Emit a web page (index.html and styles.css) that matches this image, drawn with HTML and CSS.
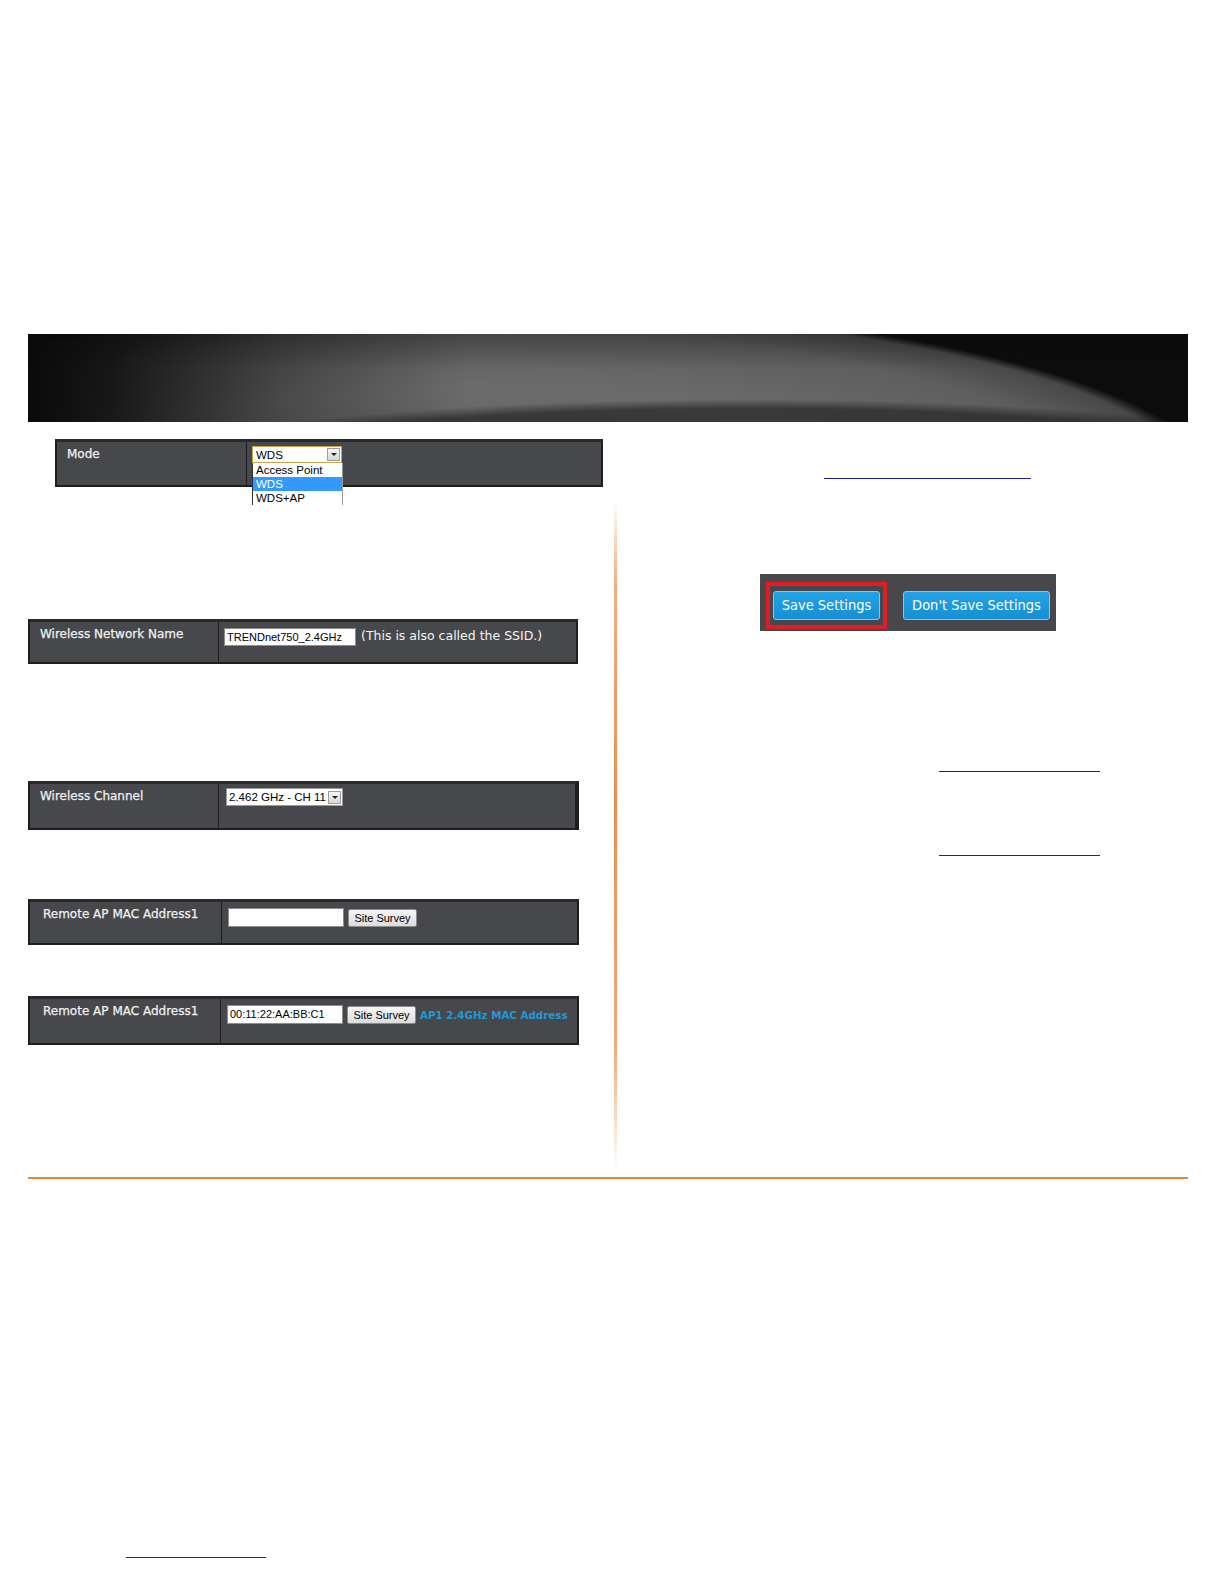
FILE: index.html
```html
<!DOCTYPE html>
<html>
<head>
<meta charset="utf-8">
<title>Wireless WDS settings</title>
<link rel="stylesheet" href="styles.css">
</head>
<body>
<div class="page">
  <div class="banner"></div>
  <div class="columns">
    <div class="left">
      <div class="panel panel-mode">
        <div class="label">Mode</div>
        <div class="value">
          <div class="select-wrap">
            <div class="select select-focus select-mode"><span class="select-text">WDS</span><span class="arrow"></span></div>
            <ul class="dropdown">
              <li>Access Point</li>
              <li class="selected">WDS</li>
              <li>WDS+AP</li>
            </ul>
          </div>
        </div>
      </div>

      <div class="panel panel-ssid">
        <div class="label">Wireless Network Name</div>
        <div class="value">
          <div class="input input-ssid">TRENDnet750_2.4GHz</div>
          <span class="note">(This is also called the SSID.)</span>
        </div>
      </div>

      <div class="panel panel-channel">
        <div class="label">Wireless Channel</div>
        <div class="value">
          <div class="select select-channel"><span class="select-text">2.462 GHz - CH 11</span><span class="arrow"></span></div>
        </div>
      </div>

      <div class="panel panel-remote1">
        <div class="label label-wide">Remote AP MAC Address1</div>
        <div class="value">
          <div class="input input-mac"></div>
          <div class="btn-survey">Site Survey</div>
        </div>
      </div>

      <div class="panel panel-remote2">
        <div class="label label-wide">Remote AP MAC Address1</div>
        <div class="value">
          <div class="input input-mac">00:11:22:AA:BB:C1</div>
          <div class="btn-survey">Site Survey</div>
          <span class="mac-note">AP1 2.4GHz MAC Address</span>
        </div>
      </div>
    </div>

    <div class="divider"></div>

    <div class="right">
      <a class="link link-1"></a>
      <div class="save-panel">
        <div class="highlight">
          <div class="btn-blue">Save Settings</div>
        </div>
        <div class="btn-blue btn-dont">Don't Save Settings</div>
      </div>
      <a class="link link-2"></a>
      <a class="link link-3"></a>
    </div>
  </div>
  <div class="rule"></div>
  <a class="link link-footer"></a>
</div>
</body>
</html>
```

FILE: styles.css
```css
html {
  margin: 0;
  padding: 0;
  width: 1224px;
  height: 1584px;
  overflow: hidden;
  background: #ffffff;
}

body {
  margin: 0;
  padding: 0;
  width: 1224px;
  height: 1584px;
  overflow: hidden;
  background: #ffffff;
  font-family: "DejaVu Sans", Verdana, sans-serif;
}

.page {
  box-sizing: border-box;
  width: 1224px;
  height: 1584px;
  padding: 334px 36px 0 28px;
}

.banner {
  width: 1160px;
  height: 88px;
  background:
    linear-gradient(90deg, #0a0a0a 0%, rgba(10,10,10,0.85) 7%, rgba(10,10,10,0.35) 22%, rgba(10,10,10,0) 38%),
    linear-gradient(180deg, rgba(10,10,10,0.3) 0%, rgba(10,10,10,0) 40%),
    radial-gradient(ellipse 700px 95px at 720px 160px, rgba(25,25,25,0.65) 0%, rgba(25,25,25,0.6) 90%, rgba(25,25,25,0) 100%),
    radial-gradient(ellipse 750px 190px at 446px 160px, #5c5c5c 0%, #6c6c6c 55%, #5e5e5e 85%, #484848 97%, #0c0c0c 100%);
  background-color: #0b0b0b;
}

.columns {
  display: grid;
  grid-template-columns: 586px 3px 1fr;
  height: 755px;
}

.left {
  display: flex;
  flex-direction: column;
  align-items: flex-start;
}

.panel {
  box-sizing: border-box;
  display: grid;
  background: #47484c;
  border: 2px solid #1e1e1f;
  border-top: 3px solid #2a2a2c;
  color: #f2f2f2;
}

.panel-mode {
  margin: 17px 0 0 27px;
  width: 548px;
  height: 48px;
  grid-template-columns: 190px 1fr;
}

.panel-ssid {
  margin-top: 132px;
  width: 550px;
  height: 45px;
  grid-template-columns: 189px 1fr;
}

.panel-channel {
  margin-top: 117px;
  width: 551px;
  height: 49px;
  grid-template-columns: 189px 1fr;
  border-right-width: 4px;
}

.panel-remote1 {
  margin-top: 69px;
  width: 551px;
  height: 46px;
  grid-template-columns: 192px 1fr;
}

.panel-remote2 {
  margin-top: 51px;
  width: 551px;
  height: 49px;
  grid-template-columns: 191px 1fr;
}

.label {
  border-right: 1px solid #1e1e1f;
  padding: 5px 0 0 10px;
  font-size: 12px;
  line-height: 14px;
  color: #f0f0f0;
  -webkit-text-stroke: 0.25px #f0f0f0;
  white-space: nowrap;
}

.label-wide {
  padding-left: 13px;
}

.value {
  display: flex;
  align-items: flex-start;
  padding: 3px 0 0 5px;
  gap: 4px;
}

.select-wrap {
  position: relative;
  margin-top: 1px;
}

.select {
  box-sizing: border-box;
  display: flex;
  align-items: center;
  justify-content: space-between;
  background: #ffffff;
  border: 1px solid #9a9a9a;
  color: #000;
  font-family: "Liberation Sans", Arial, sans-serif;
  font-size: 11.5px;
  padding: 0 1px 0 3px;
  white-space: nowrap;
}

.select-focus {
  border-color: #c9a54a;
}

.select-mode {
  width: 90px;
  height: 17px;
}

.select-channel {
  width: 117px;
  height: 18px;
  margin: 1px 0 0 2px;
  padding-left: 2px;
}

.arrow {
  box-sizing: border-box;
  flex-shrink: 0;
  width: 13px;
  height: 13px;
  background: linear-gradient(#f4f4f4, #d8d8d8);
  border: 1px solid #9c9c9c;
  position: relative;
}

.arrow::after {
  content: "";
  position: absolute;
  left: 3px;
  top: 4px;
  border-left: 3px solid transparent;
  border-right: 3px solid transparent;
  border-top: 3px solid #222;
}

.dropdown {
  position: absolute;
  left: 0;
  top: 17px;
  width: 89px;
  margin: 0;
  padding: 0;
  list-style: none;
  background: #ffffff;
  border-left: 1px solid #333;
  border-right: 1px solid #999;
  font-family: "Liberation Sans", Arial, sans-serif;
  font-size: 11.5px;
  line-height: 14px;
  color: #000;
  z-index: 2;
}

.dropdown li {
  padding-left: 3px;
  height: 14px;
}

.dropdown li.selected {
  background: #3399ff;
  color: #ffffff;
}

.input {
  box-sizing: border-box;
  background: #ffffff;
  border: 1px solid #8c8c8c;
  color: #000;
  font-family: "Liberation Sans", Arial, sans-serif;
  font-size: 11px;
  line-height: 16px;
  padding-left: 2px;
  white-space: nowrap;
  overflow: hidden;
}

.input-ssid {
  width: 132px;
  height: 18px;
  margin-top: 3px;
}

.note {
  font-size: 12.5px;
  line-height: 18px;
  margin-top: 2px;
  margin-left: 1px;
  color: #f4f4f4;
  white-space: nowrap;
}

.input-mac {
  width: 116px;
  height: 19px;
  margin-top: 3px;
  margin-left: 1px;
}

.btn-survey {
  box-sizing: border-box;
  height: 18px;
  width: 69px;
  margin-top: 4px;
  background: linear-gradient(#f6f6f6, #dcdcdc);
  border: 1px solid #8a8a8a;
  border-radius: 2px;
  color: #000;
  font-family: "Liberation Sans", Arial, sans-serif;
  font-size: 11px;
  line-height: 16px;
  text-align: center;
  white-space: nowrap;
}

.mac-note {
  margin-top: 5px;
  font-weight: bold;
  font-size: 10.3px;
  line-height: 16px;
  color: #1f9ad8;
  white-space: nowrap;
}

.divider {
  margin-top: 78px;
  height: 670px;
  background: linear-gradient(to bottom, rgba(240,140,80,0) 0%, rgba(240,140,80,0.7) 12%, #ee8a4c 45%, rgba(240,140,80,0.75) 82%, rgba(240,140,80,0) 100%);
}

.right {
  display: flex;
  flex-direction: column;
  align-items: flex-start;
}

.link {
  display: block;
  height: 0;
  border-bottom: 1px solid #1f1f99;
}

.link-1 {
  margin: 56px 0 0 207px;
  width: 207px;
}

.save-panel {
  box-sizing: border-box;
  display: flex;
  align-items: flex-start;
  gap: 16px;
  margin: 95px 0 0 143px;
  width: 296px;
  height: 57px;
  padding: 8px 0 0 6px;
  background: #48484c;
}

.highlight {
  border: 4px solid #e31b23;
  padding: 5px 3px;
}

.btn-blue {
  box-sizing: border-box;
  height: 29px;
  padding: 0 8px;
  background: linear-gradient(#22a3e6, #1590d2);
  border: 1px solid #7dcaf0;
  border-radius: 3px;
  color: #ffffff;
  font-family: "DejaVu Sans Condensed", "DejaVu Sans", sans-serif;
  font-size: 14.5px;
  line-height: 27px;
  white-space: nowrap;
}

.highlight .btn-blue {
  width: 107px;
  text-align: center;
  padding: 0;
}

.btn-dont {
  margin-top: 9px;
  width: 147px;
  text-align: center;
  padding: 0;
}

.link-2 {
  margin: 140px 0 0 322px;
  width: 161px;
}

.link-3 {
  margin: 83px 0 0 322px;
  width: 161px;
}

.rule {
  width: 1160px;
  height: 2px;
  background: #e8823a;
}

.link-footer {
  margin: 378px 0 0 98px;
  width: 140px;
}
```
